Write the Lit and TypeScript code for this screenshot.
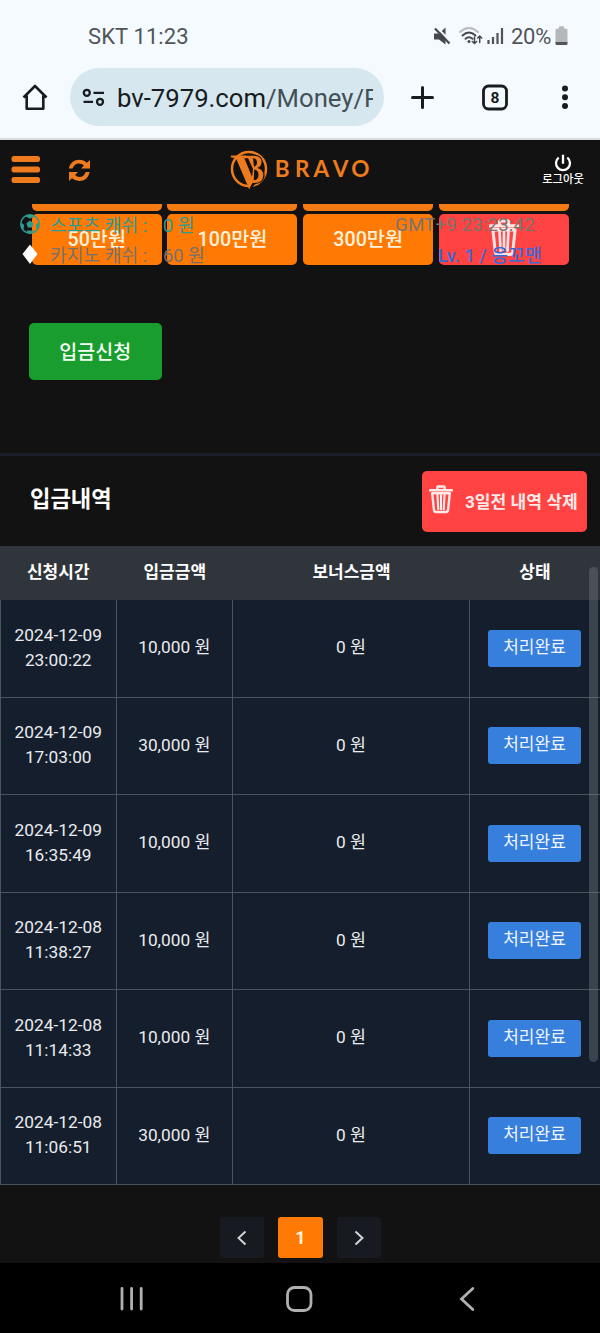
import { LitElement, html, css, svg } from "lit";
import { customElement, property } from "lit/decorators.js";

const trash = svg`
  <path d="M1 5.5h24M9 5V2.6q0-1.1 1.1-1.1h5.8q1.1 0 1.1 1.1V5" fill="none" stroke="currentColor" stroke-width="2.6" stroke-linecap="round"/>
  <path d="M3.400 8.500l2 17.400q.3 2.100 2.400 2.100h10.400q2.100 0 2.400-2.100l2-17.400z" fill="none" stroke="currentColor" stroke-width="2.6" stroke-linejoin="round"/>
  <path d="M9.200 10.500l.8 14.500M13 10.500V25M16.800 10.500L16 25" fill="none" stroke="currentColor" stroke-width="2.300" stroke-linecap="round"/>`;

@customElement("phone-top")
export class PhoneTop extends LitElement {
  static styles = css`
    :host { display: block; height: 138px; background: #f5faff; border-bottom: 2px solid #d9dde1; color: #171c20; }
    svg { display: block; flex: none; }
    .status { display: flex; height: 68px; padding: 21px 31px 0 88px; box-sizing: border-box; color: #505458; font-size: 22px; line-height: 32px; }
    .carrier { flex: 1; letter-spacing: 0.1px; }
    .percent { margin-left: 2px; width: 44px; white-space: nowrap; letter-spacing: -0.3px; }
    .status svg { margin-top: 5px; }
    .bar { display: flex; align-items: center; height: 58px; padding-left: 22px; }
    .url { display: flex; align-items: center; width: 314px; height: 58px; margin-left: 22px; padding-left: 12px; box-sizing: border-box; border-radius: 29px; background: #d7e7ef; }
    .address { width: 256px; margin-left: 11px; overflow: hidden; white-space: nowrap; font-size: 25.700px; line-height: 40px; padding-top: 2px; }
    .path { color: #435057; }
    .tools { margin-left: 22px; }
  `;
  render() {
    return html`
      <div class="status">
        <span class="carrier">SKT 11:23</span>
        <svg width="76" height="22" viewBox="0 0 76 22">
          <g fill="#45494d">
            <path d="M1 7.500h5l6.500-6v17l-6.500-5H1z"/>
            <path d="M3.500 1l14 14.500" stroke="#f5faff" stroke-width="2"/>
            <path d="M2 2.500l14.500 15" stroke="#45494d" stroke-width="2.200"/>
          </g>
          <g fill="none" stroke-linecap="round" stroke-width="1.900">
            <path d="M27 6q9-8 18 0" stroke="#b8bcc0"/>
            <path d="M29.500 9.500q6.500-6 13 0M32.500 12.800q3.500-3 7 0" stroke="#45494d"/>
            <path d="M41.500 11v6.500m-2.200-2l2.200 2 2.200-2M46.700 16.500V10m-2 2l2-2 2 2" stroke="#45494d" stroke-width="1.500"/>
          </g>
          <circle cx="36" cy="15.500" r="1.500" fill="#45494d"/>
          <path d="M55.500 14v4M60 11v7M64.500 7v11M69 2v16" stroke="#505458" stroke-width="2.200"/>
        </svg>
        <span class="percent">20%</span>
        <svg width="14" height="22" viewBox="0 0 14 22">
          <path d="M4 2.500V1q0-.8.8-.8h3.400Q9 .2 9 1v1.500h1.500q2 0 2 2v12.500H.5V4.500q0-2 2-2z" fill="#b5b8bb"/>
          <path d="M.5 16h12v1.500q0 1.500-1.500 1.500H2Q.5 19 .5 17.500z" fill="#505458"/>
        </svg>
      </div>
      <div class="bar">
        <svg width="26" height="28" viewBox="0 0 26 28"><path d="M1.500 14.500L13 3 24.500 14.500M4.700 12.500v13.200h16.600V12.500" fill="none" stroke="currentColor" stroke-width="2.600" stroke-linejoin="round"/></svg>
        <div class="url">
          <svg width="24" height="22" viewBox="0 0 24 22"><g fill="none" stroke="currentColor" stroke-width="2.300"><circle cx="4.800" cy="6.800" r="3"/><circle cx="18" cy="15.800" r="3"/><path d="M11.500 6.800H22M1.500 15.800h9.500"/></g></svg>
          <div class="address">bv-7979.com<span class="path">/Money/Post</span></div>
        </div>
        <svg class="tools" width="170" height="34" viewBox="0 0 170 34">
          <path d="M6.500 17.500h20M16.500 7.500v20" stroke="currentColor" stroke-width="3" stroke-linecap="round"/>
          <rect x="77.500" y="6" width="23" height="23" rx="5" fill="none" stroke="currentColor" stroke-width="2.800"/>
          <text x="89" y="23" text-anchor="middle" font-size="15.500" font-weight="700" fill="currentColor">8</text>
          <g fill="currentColor"><circle cx="159" cy="8.500" r="3"/><circle cx="159" cy="17.200" r="3"/><circle cx="159" cy="26" r="3"/></g>
        </svg>
      </div>`;
  }
}

@customElement("site-header")
export class SiteHeader extends LitElement {
  static styles = css`
    :host { display: flex; height: 64px; background: #121212; color: #fff; }
    svg { display: block; }
    .left { width: 230px; }
    .brand { width: 310px; }
    .logout { display: flex; flex-direction: column; align-items: center; width: 46px; padding-top: 11.500px; font-size: 11.300px; line-height: 15px; font-weight: 500; white-space: nowrap; }
  `;
  render() {
    return html`
      <svg class="left" width="230" height="64" viewBox="0 0 230 64">
        <g fill="#ee7b1d"><rect x="11.500" y="16" width="28.500" height="6" rx="2.500"/><rect x="11.500" y="26.500" width="28.500" height="6" rx="2.500"/><rect x="11.500" y="37" width="28.500" height="6" rx="2.500"/>
          <path d="M90 20v8.500h-9l3-3q-2.300-2-5-2-4.500 0-6.500 5h-3.700q2-8.800 10.500-8.800 4.500 0 7.500 3zM69 41v-9h9l-3 3q2 2 4.500 2 4.500 0 6.200-5h4q-2 9-10.500 9-4.200 0-7.200-2.700z"/></g>
      </svg>
      <svg class="brand" width="310" height="64" viewBox="0 0 310 64">
        <circle cx="19" cy="29" r="17" fill="none" stroke="#ee7b1d" stroke-width="2.500"/>
        <path d="M13 15h13q7 1 6.500 8-.5 3-3 5 6 3 5 9-1.500 6-9 7l-5 5z" fill="#121212"/>
        <path fill-rule="evenodd" d="M14 15.700h9.500q8 0 8 6.300 0 4.400-4.200 6 6 1.500 6 7 0 8-9 8h-1.800L19 49 14 17.200zM23 18.300l1 8.400q3-.8 3-4.400 0-3.700-4-4zM24.200 29.500l-.4 10.700q4.700-.4 4.700-5.200 0-4.800-4.300-5.500z" fill="#ee7b1d"/>
        <path d="M14.500 18.500L22 37l1-8-5-11z" fill="#121212"/>
        <path d="M.8 15.500H16v1.700h-2.500L22 38.500 19.300 49.500 6 18.200.8 17.200z" fill="#ee7b1d"/>
        <text y="37" x="44.800 65 83.500 102.700 121.300" font-family="Lato, sans-serif" font-size="22.500" font-weight="700" fill="#ee7b1d">BRAVO</text>
      </svg>
      <div class="logout">
        <svg width="20" height="20" viewBox="0 0 20 20"><path d="M5.700 5.600a7 7 0 1 0 8.600 0M10 2.800v9" fill="none" stroke="currentColor" stroke-width="2.300"/></svg>
        로그아웃
      </div>`;
  }
}

@customElement("amount-panel")
export class AmountPanel extends LitElement {
  static styles = css`
    :host { display: block; position: relative; height: 249px; background: #121212; color: #fff; }
    .tails, .amounts { display: grid; grid-template-columns: repeat(4, 130px); gap: 5.700px; padding-left: 31.800px; }
    .tail { height: 6.500px; border-radius: 0 0 5px 5px; background: #f47b14; }
    .amounts { padding-top: 3.500px; }
    .amount { display: flex; align-items: center; justify-content: center; height: 51px; padding-bottom: 4px; box-sizing: border-box; border-radius: 5px; background: #ff7a05; color: #fff2dc; font-size: 19.700px; font-weight: 500; }
    .amount.clear { background: #ff4242; color: #ffe6e6; }
    .clear svg { width: 30px; height: 38px; display: block; }
    .apply { display: flex; align-items: center; justify-content: center; width: 132.500px; height: 57px; margin: 58px 0 0 29px; padding-bottom: 2px; box-sizing: border-box; border-radius: 5px; background: #1a9d2f; font-size: 19.500px; font-weight: 500; color: #f4fff4; }
    .overlay { position: absolute; left: 19px; top: 6px; width: 562px; font-size: 18.200px; line-height: 31px; white-space: nowrap; }
    .line { display: flex; height: 30px; }
    .icon { width: 22px; height: 30px; margin-right: 9px; flex: none; }
    .label { width: 113px; }
    .sports { color: #2c9b91; }
    .casino { color: #77716b; }
    .value { flex: 1; }
    .clock { width: 186px; color: #7a746d; font-size: 18.800px; letter-spacing: .1px; }
    .level { width: 143px; color: #3c69d6; font-weight: 500; font-size: 18.400px; }
  `;
  render() {
    return html`
      <div class="tails">${[0, 1, 2, 3].map(() => html`<div class="tail"></div>`)}</div>
      <div class="amounts">
        ${["50만원", "100만원", "300만원"].map((a) => html`<div class="amount">${a}</div>`)}
        <div class="amount clear"><svg viewBox="0 0 26 30" preserveAspectRatio="none">${trash}</svg></div>
      </div>
      <div class="apply">입금신청</div>
      <div class="overlay">
        <div class="line sports">
          <svg class="icon" viewBox="0 0 22 30"><circle cx="11" cy="14" r="9.200" fill="none" stroke="currentColor" stroke-width="1.600"/><path d="M11 10.500l3.600 2.700-1.400 4.300H8.800l-1.400-4.300zM6.500 6.200Q11 3.500 15.500 6.200L11 8.800zM2 12.500l3.200 2.500-.6 4.500Q1.500 16.500 2 12.500zM20 12.500l-3.200 2.500.6 4.500q3.100-3 2.600-7zM7.500 20.500h7l-1.500 3H9z" fill="currentColor"/></svg>
          <span class="label">스포츠 캐쉬 :</span><span class="value">0 원</span><span class="clock">GMT+9 23:23:42</span>
        </div>
        <div class="line casino">
          <svg class="icon" viewBox="0 0 22 30"><path d="M11 4.500L18.500 14 11 24 3.500 14z" fill="#fff"/></svg>
          <span class="label">카지노 캐쉬 :</span><span class="value">60 원</span><span class="level">Lv. 1 / 응꼬맨</span>
        </div>
      </div>`;
  }
}

interface Deposit { day: string; time: string; amount: string; }

@customElement("deposit-table")
export class DepositTable extends LitElement {
  @property({ attribute: false }) rows: Deposit[] = [];
  static styles = css`
    :host { display: block; position: relative; background: #151e2c; color: #e9ebee; }
    .row { display: grid; grid-template-columns: 116.500px 116.500px 237px 1fr; box-sizing: border-box; }
    .head { height: 54px; background: #30343b; color: #fff; font-size: 17px; font-weight: 700; text-align: center; line-height: 53px; }
    .row.body { height: 97.500px; border-left: 1px solid #4b535f; grid-template-columns: 115.500px 116.500px 237px 1fr; }
    .cell { display: flex; align-items: center; justify-content: center; text-align: center; border-right: 1px solid #4b535f; border-bottom: 1px solid #4b535f; box-sizing: border-box; font-size: 17.300px; line-height: 25px; padding-bottom: 1.500px; }
    .cell:last-child { border-right: 0; }
    .done { display: block; width: 93px; height: 37px; margin: 1.500px 1px 0 0; border-radius: 3px; background: #377fdd; color: #eef5ff; font-size: 17px; line-height: 35px; }
    .thumb { position: absolute; right: 2px; top: 21px; width: 9px; height: 495px; border-radius: 5px; background: rgba(118, 122, 133, .4); }
  `;
  render() {
    return html`
      <div class="row head"><span>신청시간</span><span>입금금액</span><span>보너스금액</span><span>상태</span></div>
      ${this.rows.map((r) => html`
        <div class="row body">
          <div class="cell"><span>${r.day}<br>${r.time}</span></div>
          <div class="cell">${r.amount} 원</div>
          <div class="cell">0 원</div>
          <div class="cell"><span class="done">처리완료</span></div>
        </div>`)}
      <div class="thumb"></div>`;
  }
}

@customElement("app-root")
export class AppRoot extends LitElement {
  static styles = css`
    :host { display: block; width: 600px; height: 1333px; overflow: hidden; background: #121212; font-family: Roboto, "Noto Sans CJK KR", sans-serif; }
    svg { display: block; }
    .title { display: flex; align-items: center; justify-content: space-between; height: 93px; box-sizing: border-box; padding: 3px 13px 0 30px; border-top: 3px solid #192027; color: #fff; }
    h2 { margin: 0 0 7px; font-size: 22.200px; line-height: 32px; font-weight: 700; }
    .delete { display: flex; align-items: center; width: 165.500px; height: 61px; margin-bottom: 3px; padding: 0 0 2px 7px; box-sizing: border-box; border-radius: 5px; background: #ff4242; font-size: 17.100px; font-weight: 700; white-space: nowrap; color: #ffeaea; }
    .delete svg { width: 24px; height: 29px; margin: -1px 12.500px 0 0; flex: none; }
    .pages { display: flex; justify-content: center; gap: 14px; height: 78px; box-sizing: border-box; padding-top: 32px; padding-left: 1px; }
    .page { display: flex; align-items: center; justify-content: center; width: 44.500px; height: 41px; border-radius: 3px; background: #171b21; color: #d5d7d9; }
    .page.current { background: #ff7a05; color: #fff2dc; font-size: 18px; font-weight: 700; }
    .nav { height: 70px; background: #000; }
  `;
  private rows: Deposit[] = [
    { day: "2024-12-09", time: "23:00:22", amount: "10,000" },
    { day: "2024-12-09", time: "17:03:00", amount: "30,000" },
    { day: "2024-12-09", time: "16:35:49", amount: "10,000" },
    { day: "2024-12-08", time: "11:38:27", amount: "10,000" },
    { day: "2024-12-08", time: "11:14:33", amount: "10,000" },
    { day: "2024-12-08", time: "11:06:51", amount: "30,000" },
  ];
  render() {
    return html`
      <phone-top></phone-top>
      <site-header></site-header>
      <amount-panel></amount-panel>
      <div class="title">
        <h2>입금내역</h2>
        <div class="delete"><svg viewBox="0 0 26 30" preserveAspectRatio="none">${trash}</svg>3일전 내역 삭제</div>
      </div>
      <deposit-table .rows=${this.rows}></deposit-table>
      <div class="pages">
        <div class="page"><svg width="12" height="16" viewBox="0 0 12 16"><path d="M9.500 1.500L2.500 8l7 6.500" fill="none" stroke="currentColor" stroke-width="1.900"/></svg></div>
        <div class="page current">1</div>
        <div class="page"><svg width="12" height="16" viewBox="0 0 12 16"><path d="M2.500 1.500L9.500 8l-7 6.500" fill="none" stroke="currentColor" stroke-width="1.900"/></svg></div>
      </div>
      <div class="nav">
        <svg width="600" height="70" viewBox="0 0 600 70" fill="none" stroke="#b0b0b0" stroke-linecap="round" stroke-width="2.800">
          <path d="M122 25.500v20.500M131.600 25.500v20.500M141.200 25.500v20.500"/>
          <rect x="287.500" y="24.500" width="23.500" height="23" rx="7"/>
          <path d="M472.800 25.500L461.500 36l11.300 10.500"/>
        </svg>
      </div>`;
  }
}
